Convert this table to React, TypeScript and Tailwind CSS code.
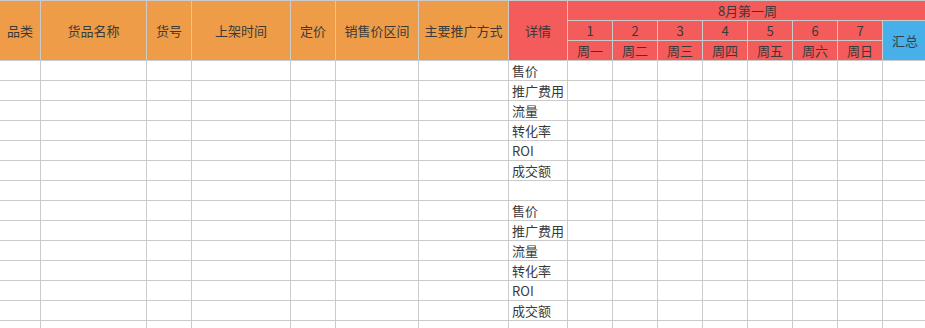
const leftHeads = ["品类", "货品名称", "货号", "上架时间", "定价", "销售价区间", "主要推广方式"];
const days = ["周一", "周二", "周三", "周四", "周五", "周六", "周日"];
const metrics = ["售价", "推广费用", "流量", "转化率", "ROI", "成交额"];

// two blocks of metric rows, with an empty spacer row between them
const rows = [...metrics, "", ...metrics, ""];

export default function App() {
	return (
		<div className="w-[925px] h-[328px] overflow-hidden bg-white font-['Noto_Sans_CJK_SC','Noto_Sans',sans-serif] text-[13px] text-[#3a3a3a]">
			<div className="grid grid-cols-[40px_105px_44px_98px_44px_82px_89px_58px_repeat(8,44px)] auto-rows-[19px] gap-px bg-[#cbcbcb] pt-px w-max">
				{leftHeads.map((h, i) => (
					<div
						key={h}
						className="flex items-center justify-center bg-[#ee9c48] leading-none"
						style={{ gridColumn: i + 1, gridRow: "1 / span 3" }}
					>
						{h}
					</div>
				))}
				<div className="col-start-8 row-start-1 row-span-3 flex items-center justify-center bg-[#f45b5b] leading-none">
					详情
				</div>
				<div className="col-start-9 col-span-8 row-start-1 flex items-center justify-center bg-[#f45b5b] leading-none">
					8月第一周
				</div>
				{days.map((d, i) => (
					<div
						key={"n" + d}
						className="row-start-2 flex items-center justify-center bg-[#f45b5b] leading-none"
						style={{ gridColumn: i + 9 }}
					>
						{i + 1}
					</div>
				))}
				{days.map((d, i) => (
					<div
						key={d}
						className="row-start-3 flex items-center justify-center bg-[#f45b5b] leading-none"
						style={{ gridColumn: i + 9 }}
					>
						{d}
					</div>
				))}
				<div className="col-start-16 row-start-2 row-span-2 flex items-center justify-center bg-[#47b0e8] leading-none text-[#2f4050]">
					汇总
				</div>

				{rows.map((m, r) =>
					Array.from({ length: 16 }, (_, c) => (
						<div
							key={r + "-" + c}
							className="bg-white flex items-center pl-[3px] pb-px leading-none whitespace-nowrap"
						>
							{c === 7 ? m : ""}
						</div>
					)),
				)}
			</div>
		</div>
	);
}
